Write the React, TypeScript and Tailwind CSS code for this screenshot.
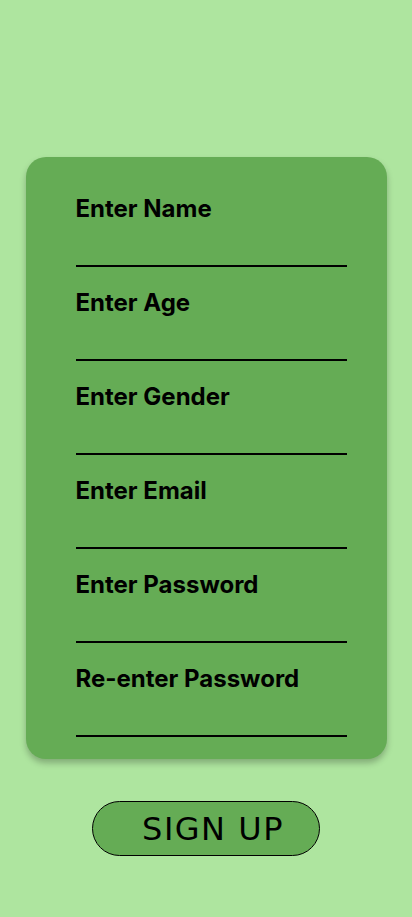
import React from "react";

const labels = [
  "Enter Name",
  "Enter Age",
  "Enter Gender",
  "Enter Email",
  "Enter Password",
  "Re-enter Password",
];

export default function App() {
  return (
    <div className="min-h-[917px] w-full bg-[#aee59f] flex flex-col items-center pt-[157px]" style={{ fontFamily: "Inter, 'Noto Sans', sans-serif" }}>
      <div className="w-[361px] rounded-[20px] bg-[#65ac55] shadow-[0_4px_6px_rgba(0,0,0,0.25)] pt-[37px] pb-[22px] pl-[50px] pr-[40px] flex flex-col gap-[21px]">
        {labels.map((l) => (
          <div key={l} className="flex flex-col">
            <div className="text-[24px] leading-[29px] font-bold text-black">{l}</div>
            <div className="mt-[42px] h-[2px] bg-black w-[271px]" />
          </div>
        ))}
      </div>
      <button className="mt-[42px] w-[228px] h-[55px] rounded-full border border-black bg-[#65ac55] flex items-center justify-center pl-[14px]">
        <span className="text-[32px] leading-none text-black tracking-[1.5px]" style={{ fontFamily: "'DejaVu Sans', sans-serif" }}>SIGN UP</span>
      </button>
    </div>
  );
}
